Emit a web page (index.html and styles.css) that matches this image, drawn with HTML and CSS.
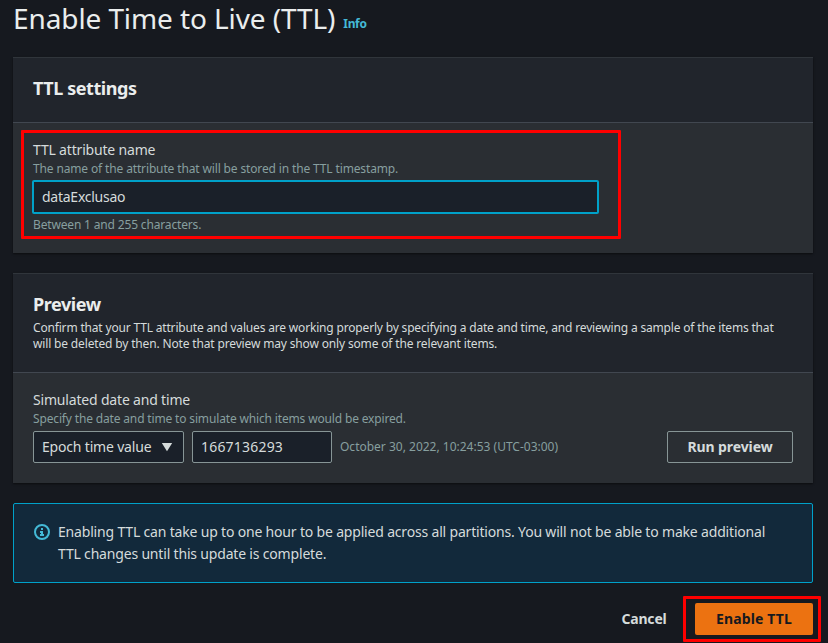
FILE: index.html
```html
<!DOCTYPE html>
<html lang="en">
<head>
<meta charset="utf-8">
<title>Enable Time to Live (TTL)</title>
<link rel="stylesheet" href="styles.css">
</head>
<body>
<main class="page">
  <header class="page-head">
    <h1>Enable Time to Live (TTL)</h1>
    <a class="info">Info</a>
  </header>
  <section class="card settings">
    <div class="card-head"><h2>TTL settings</h2></div>
    <div class="card-body">
      <div class="field highlight">
        <label class="label" for="attr">TTL attribute name</label>
        <p class="hint">The name of the attribute that will be stored in the TTL timestamp.</p>
        <div class="input focused" id="attr">dataExclusao</div>
        <p class="hint constraint">Between 1 and 255 characters.</p>
      </div>
    </div>
  </section>
  <section class="card preview">
    <div class="card-head">
      <h2>Preview</h2>
      <p class="desc">Confirm that your TTL attribute and values are working properly by specifying a date and time, and reviewing a sample of the items that<br><span class="desc-end">will be deleted by then. Note that preview may show only some of the relevant items.</span></p>
    </div>
    <div class="card-body">
      <div class="label">Simulated date and time</div>
      <p class="hint sim">Specify the date and time to simulate which items would be expired.</p>
      <div class="row">
        <div class="input select"><span>Epoch time value</span><svg width="12" height="10" viewBox="0 0 12 10"><path d="M0.8 1h10.4L6 9.3z" fill="#d5dbdb"/></svg></div>
        <div class="input epoch">1667136293</div>
        <span class="date">October 30, 2022, 10:24:53 (UTC-03:00)</span>
        <button class="btn outline">Run preview</button>
      </div>
    </div>
  </section>
  <section class="notice">
    <svg class="notice-icon" width="16" height="16" viewBox="0 0 16 16" fill="none" stroke="#44b9d6" stroke-width="2"><circle cx="8" cy="8" r="7"/><path d="M7 5h2M6 8h2M8 7v4M6 11h4"/></svg>
    <p>Enabling TTL can take up to one hour to be applied across all partitions. You will not be able to make additional<br>TTL changes until this update is complete.</p>
  </section>
  <footer class="actions">
    <button class="btn cancel">Cancel</button>
    <div class="enable-mark"><button class="btn primary">Enable TTL</button></div>
  </footer>
</main>
</body>
</html>
```
FILE: styles.css
```css
* { box-sizing: border-box; }
body { margin: 0; background: #16191f; color: #d5dbdb; font: 14px/22px "Noto Sans", sans-serif; letter-spacing: -0.18px; overflow: hidden; }
h1, h2, p { margin: 0; }
.page { height: 643px; padding: 0 15px 0 13px; }
.page-head { height: 57px; display: flex; align-items: flex-start; gap: 8px; }
h1 { font-size: 28px; line-height: 36px; font-weight: 400; letter-spacing: -0.1px; white-space: nowrap; color: #eaeded; }
.info { color: #44b9d6; font-size: 12px; font-weight: 700; letter-spacing: -0.35px; line-height: 16px; margin-top: 16px; }
.card { background: #2a2e33; box-shadow: 0 1px 2px #0008; }
.settings { height: 196px; margin-bottom: 20px; }
.preview { height: 210px; margin-bottom: 20px; }
.card-head { background: #21252c; border-top: 1px solid #30353b; border-bottom: 1px solid #414750; padding: 19px 20px; }
.settings .card-head { height: 66px; }
.preview .card-head { height: 100px; }
h2 { font-size: 18px; line-height: 22px; letter-spacing: -0.43px; color: #eaeded; }
.desc { font-size: 12px; line-height: 16px; letter-spacing: -0.174px; margin-top: 5px; white-space: nowrap; }
.desc-end { letter-spacing: -0.155px; }
.settings .card-body { padding: 7px 8px; }
.preview .card-body { padding: 16px 20px; }
.highlight { width: 600px; height: 109px; border: 3px solid #f00; border-radius: 1px; padding: 6px 9px; }
.label { display: block; line-height: 22px; }
.hint { color: #879f9f; font-size: 12px; line-height: 16px; letter-spacing: -0.14px; white-space: nowrap; }
.sim { letter-spacing: -0.155px; }
.input { height: 32px; border: 1px solid #879596; border-radius: 2px; background: #1a2029; padding: 4px 8px; white-space: nowrap; }
.focused { width: 567px; height: 34px; border: 2px solid #00a1c9; margin: 3px 0 0 -1px; letter-spacing: -0.25px; }
.constraint { margin-top: 3px; letter-spacing: -0.16px; }
.row { display: flex; align-items: center; margin-top: 4px; }
.select { width: 151px; display: flex; align-items: center; justify-content: space-between; padding-right: 10px; }
.epoch { width: 140px; margin: 0 8px; letter-spacing: 0.2px; }
.date { color: #879f9f; font-size: 12px; letter-spacing: 0; white-space: nowrap; }
.btn { font: 700 14px/22px "Noto Sans", sans-serif; border-radius: 2px; padding: 4px 0; height: 32px; white-space: nowrap; }
.outline { margin-left: auto; width: 126px; color: #d5dbdb; border: 1px solid #879596; background: transparent; letter-spacing: -0.1px; }
.notice { height: 80px; background: #12293b; border: 1px solid #00a1c9; border-radius: 2px; padding: 17px 20px; display: flex; gap: 8px; white-space: nowrap; }
.notice-icon { margin-top: 3px; flex: none; }
.actions { height: 60px; display: flex; justify-content: flex-end; margin: 13px -8px 0 0; }
.cancel { border: 0; background: none; color: #d5dbdb; width: 46px; margin: 7px 16px 0 0; letter-spacing: -0.2px; }
.enable-mark { width: 138px; height: 46px; border: 3px solid #f00; border-radius: 1px; padding: 4px 0 0 9px; }
.primary { width: 118px; background: #ec7211; color: #16191f; border: 0; letter-spacing: 0.15px; }
```
